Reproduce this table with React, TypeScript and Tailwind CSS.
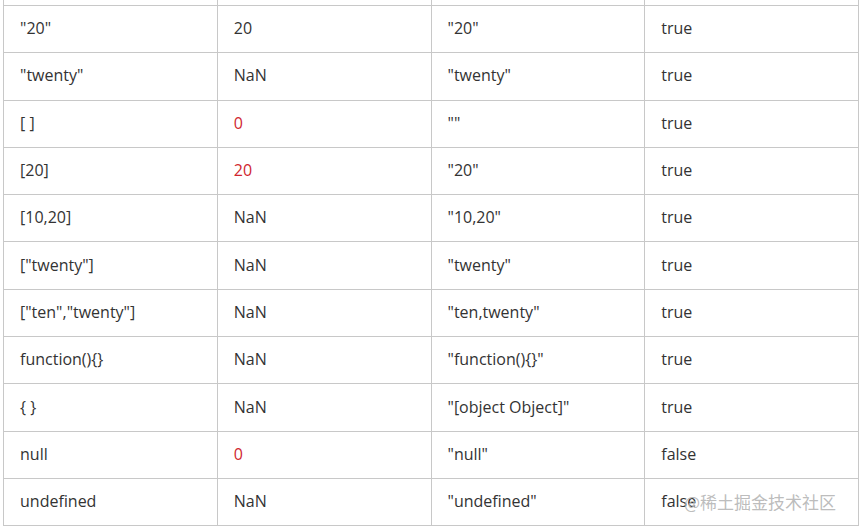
const rows: [string, string, string, string][] = [
  ["", "", "", ""],
  ['"20"', "20", '"20"', "true"],
  ['"twenty"', "NaN", '"twenty"', "true"],
  ["[ ]", "0", '""', "true"],
  ["[20]", "20", '"20"', "true"],
  ["[10,20]", "NaN", '"10,20"', "true"],
  ['["twenty"]', "NaN", '"twenty"', "true"],
  ['["ten","twenty"]', "NaN", '"ten,twenty"', "true"],
  ["function(){}", "NaN", '"function(){}"', "true"],
  ["{ }", "NaN", '"[object Object]"', "true"],
  ["null", "0", '"null"', "false"],
  ["undefined", "NaN", '"undefined"', "false"],
];

const redRows = new Set([3, 4, 10]);

export default function App() {
  return (
    <div className="relative h-[528px] w-[862px] overflow-hidden bg-white pl-[3px] font-['Open_Sans','Noto_Sans_CJK_SC',sans-serif] text-[16px] text-[#333]">
      <table className="mt-[-42.3px] w-[856px] table-fixed border-collapse">
        <tbody>
          {rows.map((r, i) => (
            <tr key={i} className="h-[47.3px]">
              {r.map((c, j) => (
                <td
                  key={j}
                  className={`border border-[#c8c8c8] pb-[2px] pl-4 align-middle ${
                    j === 1 && redRows.has(i) ? "text-[#d0262f]" : ""
                  }`}
                >
                  {c}
                </td>
              ))}
            </tr>
          ))}
        </tbody>
      </table>
      <span className="absolute left-[684px] top-[489px] text-[17px] text-[#b4b4b4]/90 font-['Noto_Sans_CJK_SC',sans-serif]">
        @稀土掘金技术社区
      </span>
    </div>
  );
}
